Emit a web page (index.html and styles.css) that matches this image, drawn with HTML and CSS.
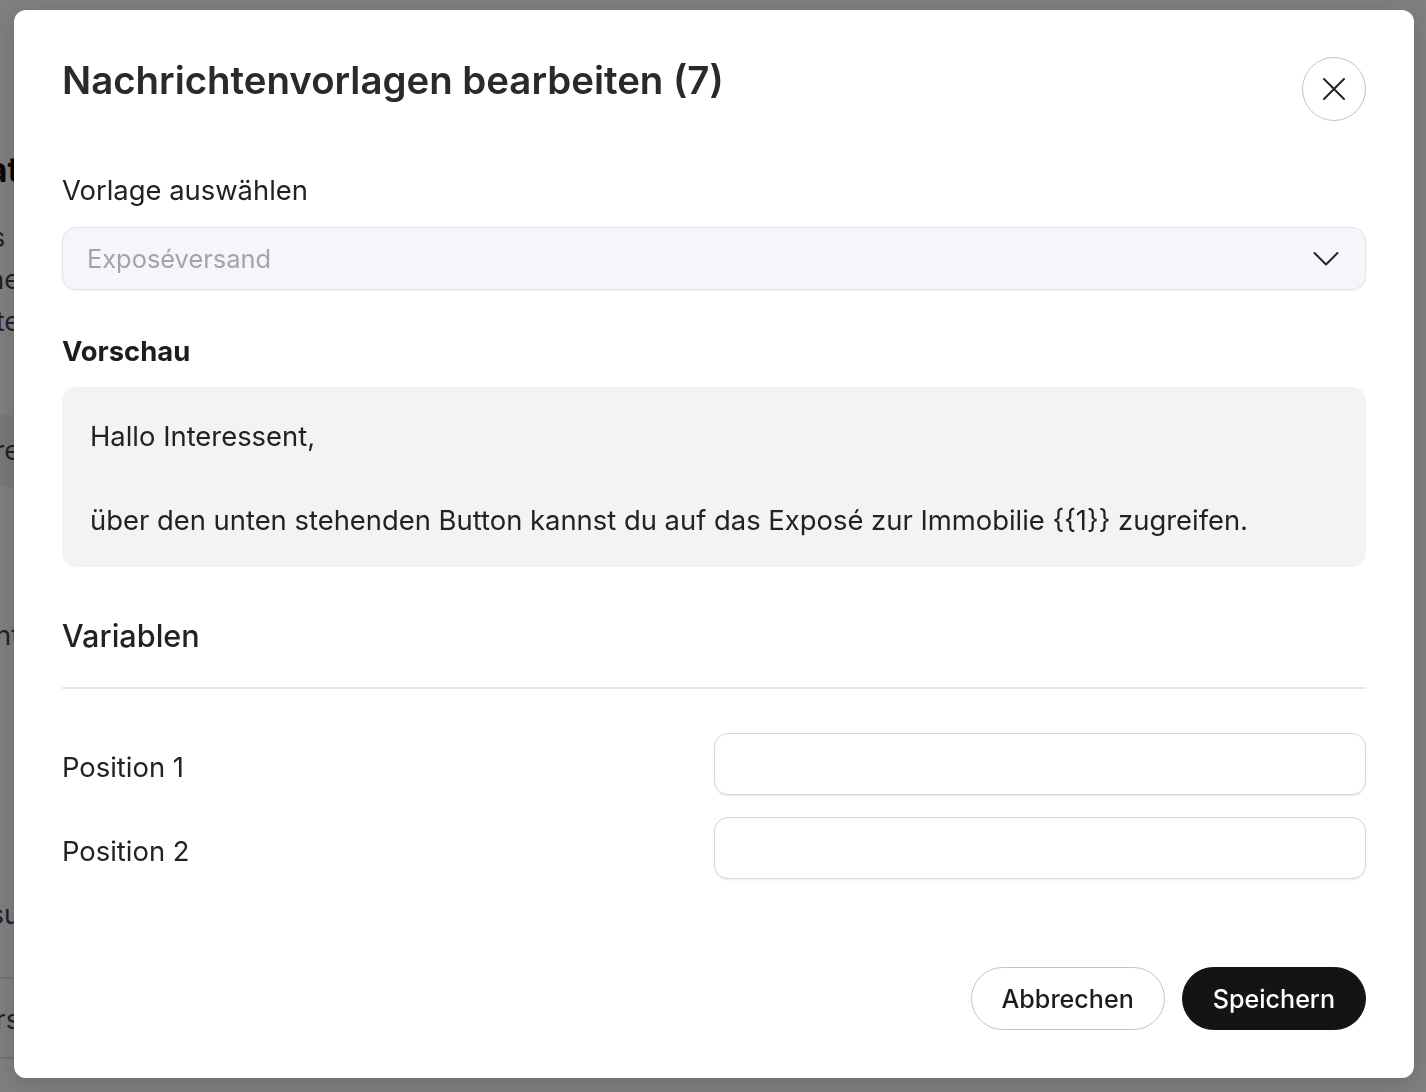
FILE: index.html
```html
<!DOCTYPE html>
<html lang="de">
<head>
  <meta charset="UTF-8">
  <title>Nachrichtenvorlagen bearbeiten</title>
  <meta name="viewport" content="width=device-width, initial-scale=1.0">
  <link rel="stylesheet" href="styles.css">
</head>
<body>
  <!-- Seite im Hintergrund -->
  <div class="page">
    <div class="page-col">
      <div class="page-title">Kontaktdat</div>
      <div class="page-line">Status I</div>
      <div class="page-line">Telefone</div>
      <div class="page-line">Notizen unte</div>
      <div class="page-row">Vorlagen vere</div>
      <div class="page-line page-gap">Interessent</div>
      <div class="page-line page-gap2">Versand aus su</div>
      <div class="page-foot">Filter vers</div>
    </div>
  </div>

  <div class="overlay">
    <div class="modal" role="dialog">
      <div class="modal-head">
        <h2 class="modal-title">Nachrichtenvorlagen bearbeiten (7)</h2>
        <button class="btn-close" type="button" aria-label="Schließen">
          <svg width="24" height="24" viewBox="0 0 24 24" fill="none" stroke="#222" stroke-width="2" stroke-linecap="round">
            <path d="M2 2 L22 22 M22 2 L2 22"/>
          </svg>
        </button>
      </div>

      <label class="field-label" for="vorlage">Vorlage auswählen</label>
      <div class="select">
        <span class="select-value" id="vorlage">Exposéversand</span>
        <svg width="26" height="16" viewBox="0 0 26 16" fill="none" stroke="#222" stroke-width="2" stroke-linecap="round" stroke-linejoin="round">
          <path d="M1.5 2 L13 13.5 L24.5 2"/>
        </svg>
      </div>

      <div class="section-label">Vorschau</div>
      <div class="preview">
        <p>Hallo Interessent,</p>
        <p>über den unten stehenden Button kannst du auf das Exposé zur Immobilie {{1}} zugreifen.</p>
      </div>

      <h3 class="vars-title">Variablen</h3>
      <div class="vars">
        <label for="pos1">Position 1</label>
        <input type="text" id="pos1">
        <label for="pos2">Position 2</label>
        <input type="text" id="pos2">
      </div>

      <div class="modal-foot">
        <button class="btn btn-outline" type="button">Abbrechen</button>
        <button class="btn btn-dark" type="button">Speichern</button>
      </div>
    </div>
  </div>
</body>
</html>
```

FILE: styles.css
```css
* {
  box-sizing: border-box;
}

html, body {
  height: 100%;
}

body {
  margin: 0;
  font-family: Inter, "Noto Sans", Arial, sans-serif;
  background-color: #fff;
  color: #222;
  overflow: hidden;
}

/* Hintergrundseite */

.page {
  height: 100%;
  overflow: hidden;
}

.page-col {
  width: 260px;
  margin-left: -240px;
  padding-top: 149px;
  font-size: 27px;
  color: #444;
  text-align: right;
}

.page-title {
  font-size: 34px;
  font-weight: bold;
  line-height: 42px;
  color: #111;
  margin-bottom: 26px;
}

.page-line {
  line-height: 42px;
}

.page-row {
  background-color: #f0f0f0;
  margin-top: 72px;
  padding: 18px 0;
  line-height: 36px;
}

.page-gap {
  margin-top: 128px;
}

.page-gap2 {
  margin-top: 237px;
}

.page-foot {
  border-top: 2px solid #e0e0e0;
  border-bottom: 2px solid #e0e0e0;
  margin-top: 41px;
  padding: 20px 0 16px;
  line-height: 42px;
}

/* Dialog */

.overlay {
  position: fixed;
  inset: 0;
  background-color: rgba(0, 0, 0, 0.5);
  display: flex;
  padding: 10px 12px 14px 14px;
}

.modal {
  flex: 1;
  background-color: #fff;
  border-radius: 12px;
  padding: 44px 48px 48px;
  display: flex;
  flex-direction: column;
  box-shadow: 0 6px 24px rgba(0, 0, 0, 0.15);
}

.modal-head {
  display: flex;
  justify-content: space-between;
  align-items: flex-start;
}

.modal-title {
  margin: 3px 0 0;
  font-size: 38.4px;
  font-weight: 600;
  line-height: 1.2;
  color: #2a2a2a;
}

.btn-close {
  width: 64px;
  height: 64px;
  margin-top: 3px;
  border-radius: 50%;
  border: 1.5px solid #c4c4c4;
  background-color: #fff;
  display: flex;
  align-items: center;
  justify-content: center;
  padding: 0;
  cursor: pointer;
}

.field-label {
  display: block;
  margin-top: 51px;
  font-size: 27.4px;
  line-height: 36px;
  color: #222;
}

.select {
  margin-top: 19px;
  height: 63px;
  border: 1.5px solid #e3e4e8;
  border-radius: 14px;
  background-color: #f5f6fa;
  box-shadow: 0 1px 2px rgba(0, 0, 0, 0.06);
  display: flex;
  align-items: center;
  justify-content: space-between;
  padding: 0 26px 0 24px;
}

.select-value {
  font-size: 25.4px;
  color: #a2a4aa;
}

.section-label {
  margin-top: 43px;
  font-size: 27.4px;
  font-weight: 700;
  line-height: 36px;
  color: #1d1d1d;
}

.preview {
  margin-top: 18px;
  background-color: #f2f3f5;
  border-radius: 14px;
  padding: 28px 28px 26px;
}

.preview p {
  margin: 0;
  font-size: 27.4px;
  line-height: 42px;
  color: #222;
}

.preview p + p {
  margin-top: 42px;
}

.vars-title {
  margin: 52px 0 0;
  font-size: 30.6px;
  font-weight: 500;
  line-height: 34px;
  color: #222;
  padding-bottom: 34px;
  border-bottom: 2px solid #e6e6ea;
}

.vars {
  margin-top: 44px;
  display: grid;
  grid-template-columns: 1fr 1fr;
  row-gap: 22px;
  align-items: center;
}

.vars label {
  font-size: 27.4px;
  color: #222;
  padding-top: 5px;
}

.vars input {
  height: 62px;
  border: 1.5px solid #d8d8d8;
  border-radius: 14px;
  background-color: #fff;
  box-shadow: 0 1px 2px rgba(0, 0, 0, 0.08);
  font: inherit;
  font-size: 25.4px;
  padding: 0 20px;
}

.modal-foot {
  margin-top: auto;
  display: flex;
  justify-content: flex-end;
  gap: 17px;
}

.btn {
  height: 63px;
  padding: 0 30px;
  border-radius: 32px;
  font-family: inherit;
  font-size: 25.1px;
  font-weight: 500;
  cursor: pointer;
}

.btn-outline {
  background-color: #fff;
  border: 1.5px solid #c4c4c4;
  color: #1d1d1d;
}

.btn-dark {
  background-color: #141414;
  border: 1.5px solid #141414;
  color: #fff;
}
```
